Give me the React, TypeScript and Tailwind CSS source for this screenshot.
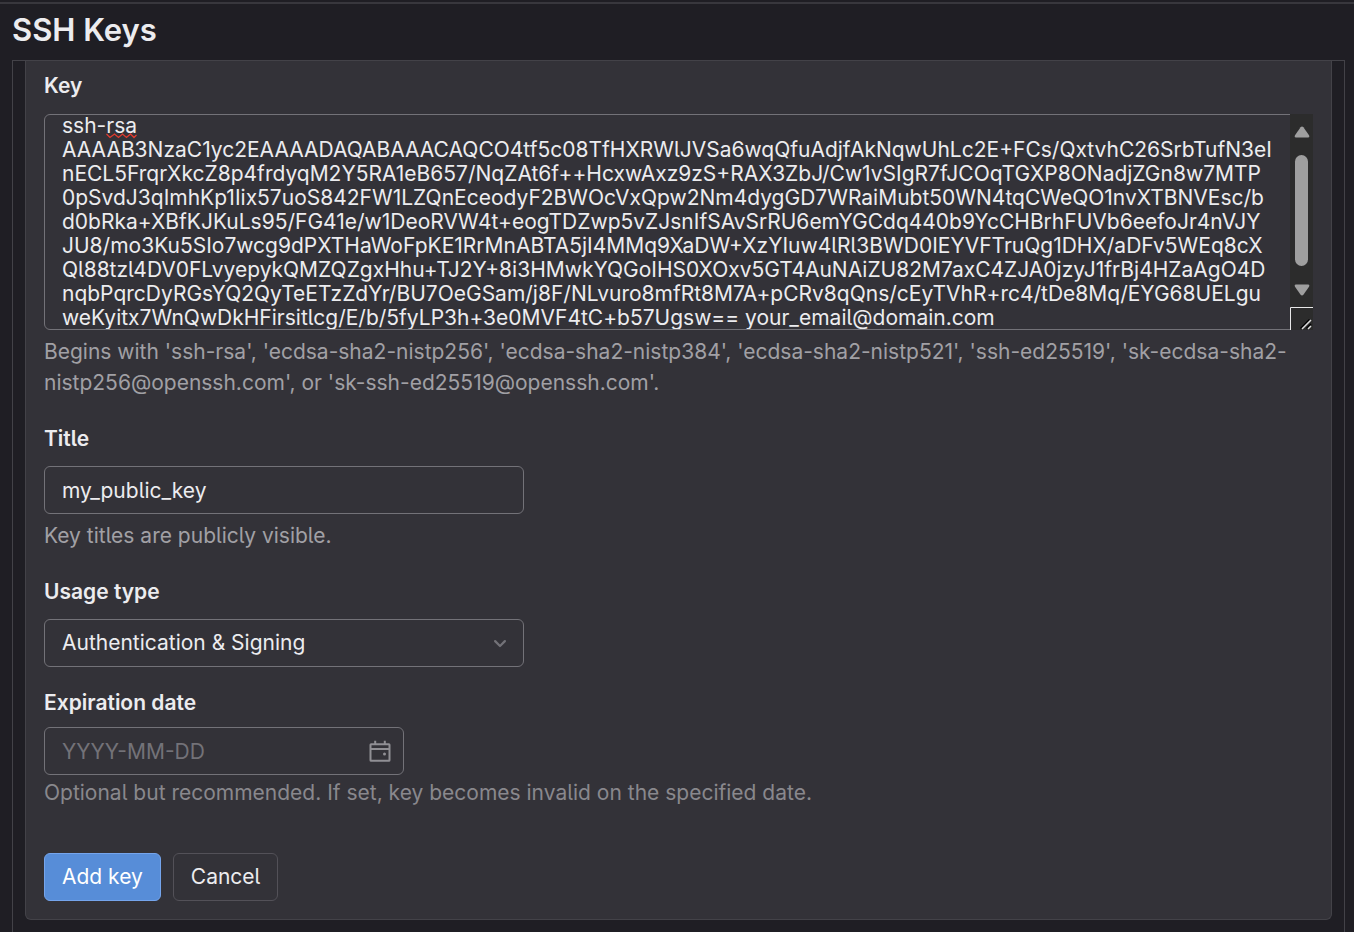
import { useLayoutEffect, useRef } from 'react';
import type { ReactNode } from 'react';

const PUBLIC_KEY = [
  'ssh-rsa',
  'AAAAB3NzaC1yc2EAAAADAQABAAACAQCO4tf5c08TfHXRWlJVSa6wqQfuAdjfAkNqwUhLc2E+FCs/QxtvhC26SrbTufN3eI',
  'nECL5FrqrXkcZ8p4frdyqM2Y5RA1eB657/NqZAt6f++HcxwAxz9zS+RAX3ZbJ/Cw1vSIgR7fJCOqTGXP8ONadjZGn8w7MTP',
  '0pSvdJ3qImhKp1Iix57uoS842FW1LZQnEceodyF2BWOcVxQpw2Nm4dygGD7WRaiMubt50WN4tqCWeQO1nvXTBNVEsc/b',
  'd0bRka+XBfKJKuLs95/FG41e/w1DeoRVW4t+eogTDZwp5vZJsnIfSAvSrRU6emYGCdq440b9YcCHBrhFUVb6eefoJr4nVJY',
  'JU8/mo3Ku5SIo7wcg9dPXTHaWoFpKE1RrMnABTA5jI4MMq9XaDW+XzYIuw4lRl3BWD0IEYVFTruQg1DHX/aDFv5WEq8cX',
  'Ql88tzl4DV0FLvyepykQMZQZgxHhu+TJ2Y+8i3HMwkYQGoIHS0XOxv5GT4AuNAiZU82M7axC4ZJA0jzyJ1frBj4HZaAgO4D',
  'nqbPqrcDyRGsYQ2QyTeETzZdYr/BU7OeGSam/j8F/NLvuro8mfRt8M7A+pCRv8qQns/cEyTVhR+rc4/tDe8Mq/EYG68UELgu',
  'weKyitx7WnQwDkHFirsitlcg/E/b/5fyLP3h+3e0MVF4tC+b57Ugsw== your_email@domain.com',
].join('\n');

function Label({ htmlFor, children }: { htmlFor: string; children: ReactNode }) {
  return (
    <label htmlFor={htmlFor} className="block font-semibold leading-[31px] text-[#ececef]">
      {children}
    </label>
  );
}

function ScrollBar() {
  return (
    <div aria-hidden="true" className="absolute inset-y-0 right-0 flex w-[23px] flex-col items-center bg-[#2c2c2c]">
      <svg className="mt-3 h-3 w-4 shrink-0" viewBox="0 0 16 12" fill="#9f9f9f">
        <path d="M6.6 1.2Q8 -.2 9.4 1.2L15 9.2Q16 11.4 14 11.6H2Q0 11.4 1 9.2Z" />
      </svg>
      <div className="mt-[17px] h-[111px] w-[13px] rounded-full bg-[#9f9f9f]" />
      <svg className="mt-[18px] h-3 w-4 shrink-0" viewBox="0 0 16 12" fill="#9f9f9f">
        <path d="M6.6 10.8Q8 12.2 9.4 10.8L15 2.8Q16 .6 14 .4H2Q0 .6 1 2.8Z" />
      </svg>
      <svg className="mt-auto h-[23px] w-[23px] shrink-0" viewBox="0 0 23 23" fill="none">
        <path d="M.5 23V.5H23" stroke="#e8e8e8" />
        <path d="M10.5 21.5L19.5 12.5M16.5 21.5L21 17" stroke="#000" strokeWidth="1.5" />
        <path d="M12 22L21 13M18 22L21 19" stroke="#ddd" strokeWidth="1.5" />
      </svg>
    </div>
  );
}

export default function App() {
  const keyRef = useRef<HTMLTextAreaElement>(null);

  useLayoutEffect(() => {
    if (keyRef.current) keyRef.current.scrollTop = 13;
  }, []);

  return (
    <div className="flex min-h-screen flex-col bg-[#1f1e24] pt-[2px] font-['Inter',sans-serif] text-[21px] text-[#ececef] [font-feature-settings:'cv05']">
      <header className="border-t-2 border-[#38373d] px-3 pb-2 pt-1">
        <h1 className="text-[31px] font-semibold leading-[44px]">SSH Keys</h1>
      </header>

      <main className="ml-3 mr-[9px] grow border border-b-0 border-[#434248] px-3 pb-3">
        <form
          className="rounded-b-md border border-t-0 border-[#434248] bg-[#333238] px-[18px] pb-[18px] pt-[9px]"
          onSubmit={(e) => e.preventDefault()}
        >
          <Label htmlFor="key">Key</Label>
          <div className="relative mt-[13px]">
            <textarea
              id="key"
              ref={keyRef}
              defaultValue={PUBLIC_KEY}
              spellCheck={false}
              wrap="off"
              aria-describedby="key-help"
              className="block h-[216px] w-full resize-none overflow-hidden rounded-md border border-[#737278] bg-[#333238] py-3 pl-[17px] pr-6 leading-6 outline-none"
            />
            <svg className="absolute left-[62px] top-[19px] h-[6px] w-[31px]" viewBox="0 0 31 6" fill="none" aria-hidden="true">
              <path d="M.5 1L4 4.5L8.5 1L12.5 4.5L16.5 1L20.5 4.5L24.5 1L28 4.5L30.5 2" stroke="#e03b2f" strokeWidth="1.3" />
            </svg>
            <ScrollBar />
          </div>
          <p id="key-help" className="mt-[6px] leading-[31px] text-[#a1a0a5]">
            Begins with 'ssh-rsa', 'ecdsa-sha2-nistp256', 'ecdsa-sha2-nistp384', 'ecdsa-sha2-nistp521', 'ssh-ed25519', 'sk-ecdsa-sha2-nistp256@openssh.com', or 'sk-ssh-ed25519@openssh.com'.
          </p>

          <div className="mt-[25px]">
            <Label htmlFor="title">Title</Label>
            <input
              id="title"
              type="text"
              defaultValue="my_public_key"
              aria-describedby="title-help"
              className="mt-3 block h-12 w-[480px] max-w-full rounded-md border border-[#737278] bg-[#333238] px-[17px] outline-none"
            />
            <p id="title-help" className="mt-[6px] leading-[31px] text-[#a1a0a5]">Key titles are publicly visible.</p>
          </div>

          <div className="mt-[25px]">
            <Label htmlFor="usage">Usage type</Label>
            <div className="relative mt-3 w-[480px] max-w-full">
              <select
                id="usage"
                defaultValue="both"
                className="block h-12 w-full appearance-none rounded-md border border-[#737278] bg-[#333238] px-[17px] outline-none"
              >
                <option value="both">Authentication &amp; Signing</option>
                <option value="auth">Authentication</option>
                <option value="sign">Signing</option>
              </select>
              <svg className="pointer-events-none absolute right-3 top-3 h-6 w-6" viewBox="0 0 16 16" fill="#737278" aria-hidden="true">
                <path fillRule="evenodd" clipRule="evenodd" d="M4.22 6.22a.75.75 0 0 1 1.06 0L8 8.94l2.72-2.72a.75.75 0 1 1 1.06 1.06l-3.25 3.25a.75.75 0 0 1-1.06 0L4.22 7.28a.75.75 0 0 1 0-1.06z" />
              </svg>
            </div>
          </div>

          <div className="mt-5">
            <Label htmlFor="expires">Expiration date</Label>
            <div className="relative mt-[9px] w-[360px] max-w-full">
              <input
                id="expires"
                type="text"
                placeholder="YYYY-MM-DD"
                aria-describedby="expires-help"
                className="block h-12 w-full rounded-md border border-[#737278] bg-[#333238] pl-[17px] pr-12 outline-none placeholder:text-[#737278]"
              />
              <svg className="pointer-events-none absolute right-3 top-3 h-6 w-6" viewBox="0 0 24 24" fill="none" stroke="#908f94" strokeWidth="2" aria-hidden="true">
                <rect x="2.5" y="5.2" width="19" height="16.6" rx=".6" />
                <path d="M2.5 10H21.5M7.2 5V1.8M16.8 5V1.8" />
                <circle cx="16.5" cy="15" r="1.5" fill="#908f94" stroke="none" />
              </svg>
            </div>
            <p id="expires-help" className="mt-[2px] leading-[31px] text-[#89888d]">
              Optional but recommended. If set, key becomes invalid on the specified date.
            </p>
          </div>

          <div className="mt-[45px] flex gap-3">
            <button type="submit" className="h-12 rounded-md border border-[#75a5ec] bg-[#578dd8] px-[17px] text-white">Add key</button>
            <button type="button" className="h-12 rounded-md border border-[#535158] bg-[#333238] px-[17px]">Cancel</button>
          </div>
        </form>
      </main>
    </div>
  );
}
